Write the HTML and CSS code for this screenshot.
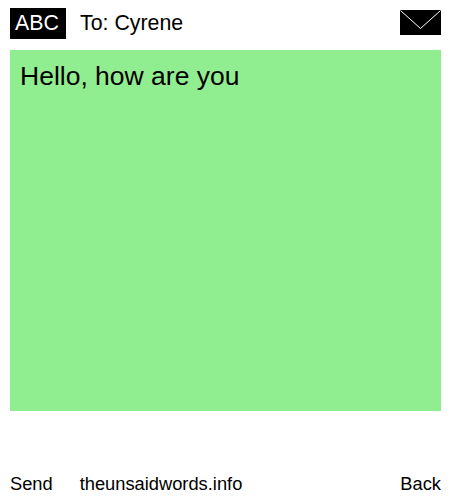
FILE: index.html
```html
<!DOCTYPE html>
<html lang="en">

<head>
    <meta charset="UTF-8">
    <meta name="viewport" content="width=device-width, initial-scale=1.0">
    <title>The Unsaid Words</title>
    <link rel="stylesheet" href="styles.css">
</head>

<body>
    <div class="container">
        <div class="header">
            <span class="mode">ABC</span>
            <span class="recipient">To: Cyrene</span>
            <svg class="envelope" width="41" height="25" viewBox="0 0 41 25">
                <rect width="41" height="25" fill="#000" />
                <path d="M0.5 0.5 L20.5 18.5 L40.5 0.5" fill="none" stroke="#fff" stroke-width="1" />
            </svg>
        </div>
        <div class="message">Hello, how are you</div>
        <div class="footer">
            <span class="send">Send</span>
            <span class="site">theunsaidwords.info</span>
            <span class="back">Back</span>
        </div>
    </div>
</body>

</html>
```

FILE: styles.css
```css
body {
    font-family: "Liberation Sans", Arial, sans-serif;
    background-color: #fff;
    color: #000;
    margin: 0;
}

.container {
    width: 431px;
    height: 500px;
    padding: 0 9px 0 10px;
    display: flex;
    flex-direction: column;
}

.header {
    display: flex;
    align-items: center;
    height: 31px;
    margin-top: 8px;
    margin-bottom: 11px;
}

.mode {
    background-color: #000;
    color: #fff;
    width: 51px;
    height: 31px;
    padding-left: 5px;
    line-height: 31px;
    font-size: 21.33px;
}

.recipient {
    margin-left: 14px;
    font-size: 21.33px;
}

.envelope {
    margin-left: auto;
    margin-bottom: 2px;
}

.message {
    background-color: #90ee90;
    height: 351px;
    padding: 10px 10px 0;
    font-size: 26.5px;
    line-height: 32px;
}

.footer {
    display: flex;
    margin-top: 61px;
    font-size: 18.3px;
    line-height: 24px;
}

.site {
    margin-left: 27px;
}

.back {
    margin-left: auto;
}
```
